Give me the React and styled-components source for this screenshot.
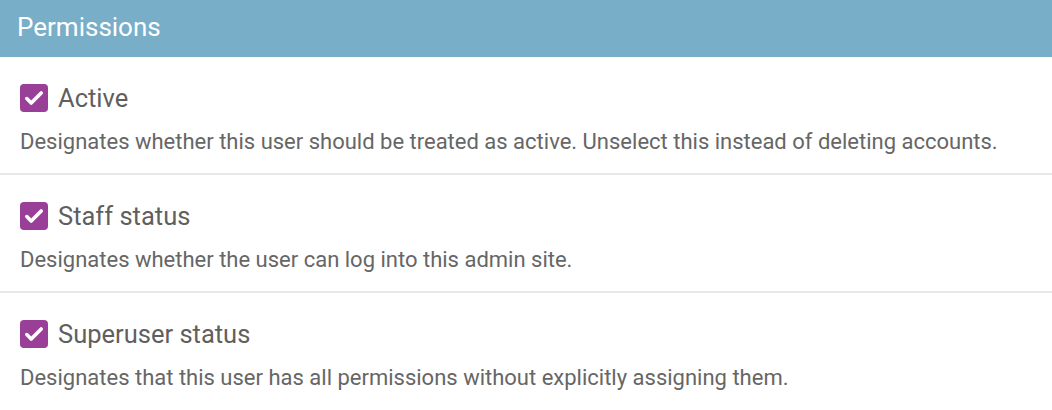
import React from 'react';
import styled, { createGlobalStyle } from 'styled-components';

const GlobalStyle = createGlobalStyle`
  body {
    margin: 0;
    background: #fff;
    font-family: Roboto, "Liberation Sans", sans-serif;
  }
`;

const Fieldset = styled.div`
  width: 1052px;
`;

const Header = styled.h2`
  margin: 0;
  height: 57px;
  background: #79aec8;
  color: #fff;
  font-size: 26px;
  font-weight: 400;
  line-height: 54px;
  padding: 0 17px;
`;

const Row = styled.div`
  padding: 27px 20px 0;
  height: 118px;
  box-sizing: border-box;
  border-bottom: ${props => (props.last ? 'none' : '2px solid #e8e8e8')};
`;

const LabelLine = styled.label`
  display: flex;
  align-items: center;
  gap: 10px;
  color: #5f5f5f;
  font-size: 25.5px;
  height: 28px;
`;

const Box = styled.span`
  width: 28px;
  height: 28px;
  border-radius: 4px;
  background: #9a3f98;
  display: block;
  flex-shrink: 0;
`;

const Help = styled.div`
  margin-top: 16px;
  color: #666;
  font-size: 22px;
  line-height: 28px;
`;

const Check = () => (
  <Box>
    <svg width="28" height="28" viewBox="0 0 28 28">
      <path d="M6.8 14.6 L11.2 19 L21.2 9" fill="none" stroke="#fff" strokeWidth="3.6" strokeLinecap="round" strokeLinejoin="round" />
    </svg>
  </Box>
);

const items = [
  { label: 'Active', help: 'Designates whether this user should be treated as active. Unselect this instead of deleting accounts.' },
  { label: 'Staff status', help: 'Designates whether the user can log into this admin site.' },
  { label: 'Superuser status', help: 'Designates that this user has all permissions without explicitly assigning them.' },
];

export default function App() {
  return (
    <Fieldset>
      <GlobalStyle />
      <Header>Permissions</Header>
      {items.map((it, i) => (
        <Row key={it.label} last={i === items.length - 1}>
          <LabelLine>
            <Check />
            {it.label}
          </LabelLine>
          <Help>{it.help}</Help>
        </Row>
      ))}
    </Fieldset>
  );
}
